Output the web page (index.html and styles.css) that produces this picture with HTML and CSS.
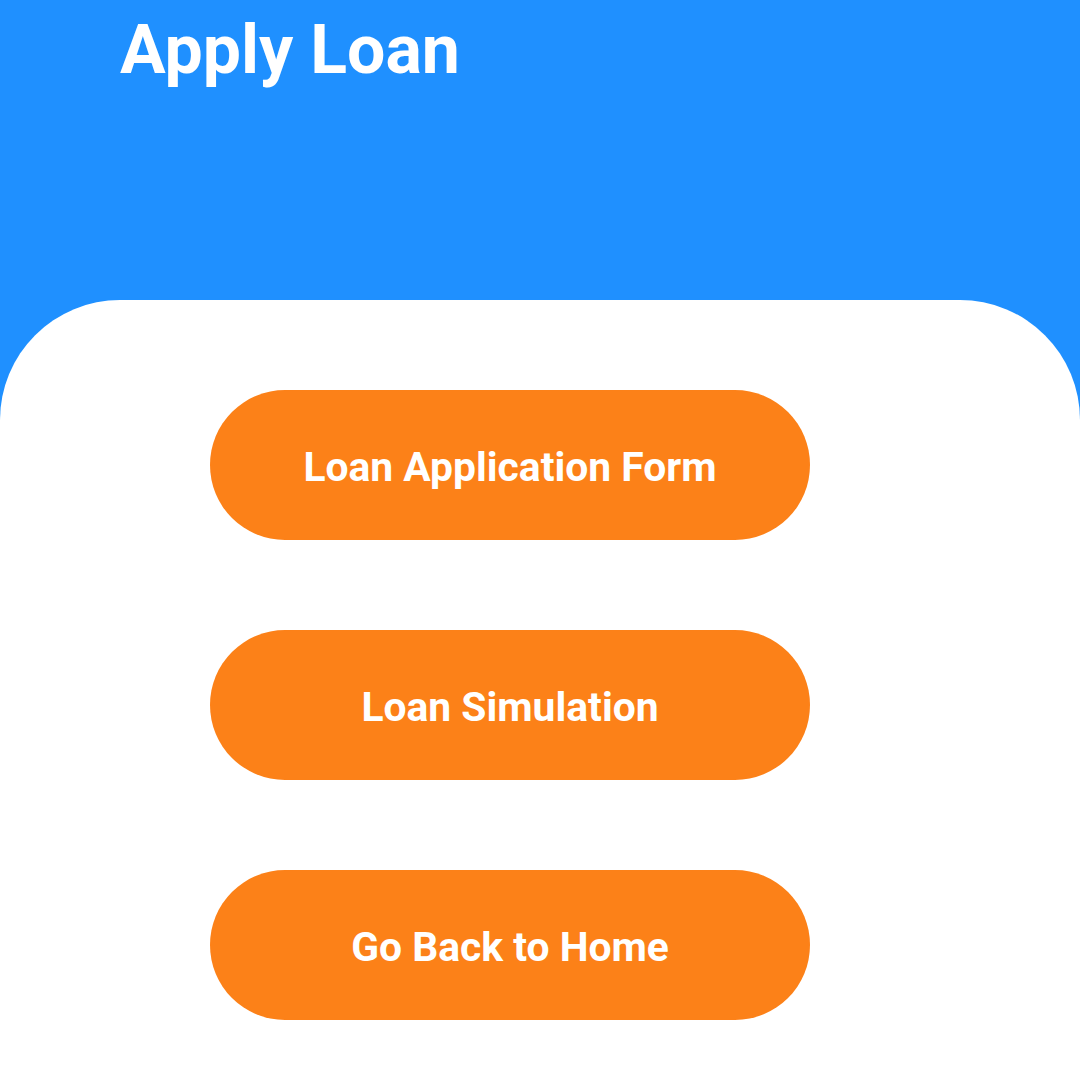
FILE: index.html
```html
<!DOCTYPE html>
<html lang="en">
<head>
<meta charset="utf-8">
<title>Apply Loan</title>
<link rel="stylesheet" href="styles.css">
</head>
<body>
<div class="screen">
  <header class="header">
    <h1 class="title">Apply Loan</h1>
  </header>
  <main class="panel">
    <button class="action">Loan Application Form</button>
    <button class="action">Loan Simulation</button>
    <button class="action">Go Back to Home</button>
  </main>
</div>
</body>
</html>
```
FILE: styles.css
```css
html, body {
  margin: 0;
  padding: 0;
  background: #ffffff;
}
.screen {
  width: 1080px;
  height: 1080px;
  background: #1f90ff;
  display: flex;
  flex-direction: column;
  font-family: Roboto, "Noto Sans", sans-serif;
  overflow: hidden;
}
.header {
  height: 300px;
  box-sizing: border-box;
  padding: 16px 0 0 120px;
}
.title {
  margin: 0;
  color: #ffffff;
  font-size: 68px;
  line-height: 68px;
  font-weight: 700;
}
.panel {
  flex: 1;
  background: #ffffff;
  border-radius: 120px 120px 0 0;
  display: flex;
  flex-direction: column;
  gap: 90px;
  padding: 90px 0 0 210px;
}
.action {
  width: 600px;
  height: 150px;
  border: none;
  border-radius: 75px;
  background: #fc8118;
  color: #ffffff;
  font-family: Roboto, "Noto Sans", sans-serif;
  font-size: 40.8px;
  font-weight: 700;
  padding: 4px 0 0 0;
  cursor: pointer;
}
```
